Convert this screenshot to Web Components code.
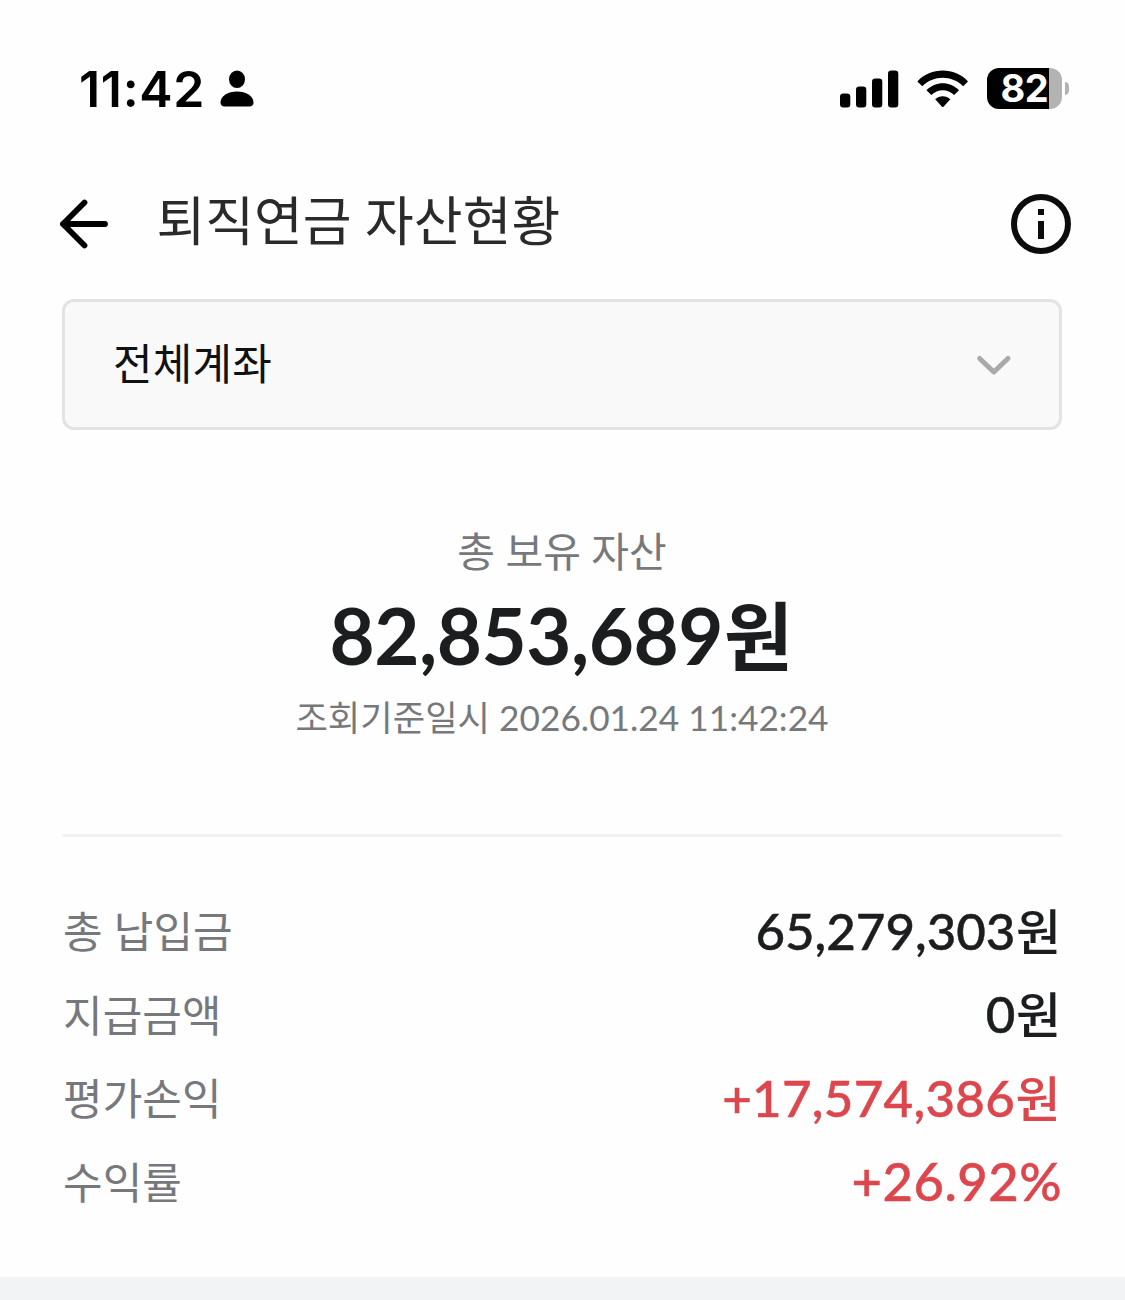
<!DOCTYPE html>
<html lang="ko">
<head>
    <meta charset="UTF-8">
    <meta name="viewport" content="width=device-width, initial-scale=1.0">
    <title>퇴직연금 자산현황</title>
    <style>
        body {
            margin: 0;
            background: #fefefe;
            color: #1c1d1f;
            font-family: Lato, "Noto Sans CJK KR", sans-serif;
        }
    </style>
</head>
<body>
    <pension-app>
        <status-bar slot="top" time="11:42" battery="82"></status-bar>
        <page-header slot="top">퇴직연금 자산현황</page-header>
        <account-select>전체계좌</account-select>
        <asset-summary>
            <span slot="label">총 보유 자산</span>
            <span slot="amount">82,853,689</span>
            <span slot="unit">원</span>
            <span slot="date">조회기준일시 2026.01.24 11:42:24</span>
        </asset-summary>
        <asset-list>
            <asset-row label="총 납입금" unit="원">65,279,303</asset-row>
            <asset-row label="지급금액" unit="원">0</asset-row>
            <asset-row label="평가손익" unit="원" class="profit">+17,574,386</asset-row>
            <asset-row label="수익률" class="profit rate">+26.92%</asset-row>
        </asset-list>
    </pension-app>

    <script>
        class PensionApp extends HTMLElement {
            constructor() {
                super();
                this.attachShadow({ mode: 'open' });
                this.shadowRoot.innerHTML = `
                    <style>
                        :host {
                            display: flex;
                            flex-direction: column;
                            height: 1300px;
                            overflow: hidden;
                        }
                        main {
                            padding: 29px 63px 0 62px;
                        }
                        footer {
                            flex: 1;
                            margin-top: 66px;
                            background: #f2f3f5;
                        }
                    </style>
                    <slot name="top"></slot>
                    <main><slot></slot></main>
                    <footer></footer>
                `;
            }
        }

        class StatusBar extends HTMLElement {
            constructor() {
                super();
                this.attachShadow({ mode: 'open' });
                this.shadowRoot.innerHTML = `
                    <style>
                        :host {
                            display: flex;
                            justify-content: space-between;
                            align-items: center;
                            height: 178px;
                            padding: 0 56px 1px 79px;
                            box-sizing: border-box;
                            color: #000;
                            font-family: Inter, "Liberation Sans", sans-serif;
                        }
                        .side {
                            display: flex;
                            align-items: center;
                        }
                        .time {
                            font-size: 50px;
                            line-height: 60px;
                            font-weight: 600;
                            letter-spacing: 0.7px;
                            margin-right: 15px;
                        }
                        svg {
                            display: block;
                        }
                        .signal {
                            margin-right: 18px;
                        }
                        .wifi {
                            margin-right: 18px;
                        }
                        .battery {
                            width: 75px;
                            height: 41px;
                            padding-left: 13.5px;
                            box-sizing: border-box;
                            border-radius: 12px;
                            background: linear-gradient(90deg, #000 62px, #b3b3b3 62px);
                            color: #fff;
                            font-size: 38px;
                            line-height: 41px;
                            font-weight: 700;
                            letter-spacing: -0.5px;
                        }
                        .cap {
                            width: 4px;
                            height: 13px;
                            margin-left: 3px;
                            border-radius: 0 6px 6px 0 / 0 7px 7px 0;
                            background: #b3b3b3;
                        }
                    </style>
                    <div class="side">
                        <span class="time">${this.getAttribute('time')}</span>
                        <svg width="34" height="37" viewBox="0 0 34 37">
                            <ellipse cx="17" cy="9.2" rx="8" ry="8.8"/>
                            <path d="M0.5 32.5C0.5 26 8 21.5 17 21.5S33.5 26 33.5 32.5C33.5 35.2 32 36.5 29 36.5H5C2 36.5 0.5 35.2 0.5 32.5Z"/>
                        </svg>
                    </div>
                    <div class="side">
                        <svg class="signal" width="59" height="38" viewBox="0 0 59 38">
                            <rect x="0" y="23.5" width="10.3" height="14" rx="3.3"/>
                            <rect x="16" y="16.5" width="10.3" height="21" rx="3.3"/>
                            <rect x="32" y="8.5" width="10.3" height="29" rx="3.3"/>
                            <rect x="48" y="0.5" width="10.3" height="37" rx="3.3"/>
                        </svg>
                        <svg class="wifi" width="52" height="38" viewBox="0 0 52 38">
                            <path d="M0.4 11.4C14 -3 37.5 -3 51 11.4L46.2 16.2C35 4.8 16.5 4.8 5.3 16.2Z"/>
                            <path d="M9.5 20.3C18.7 11 32.8 11 42 20.3L37.2 25C30.6 18.5 20.9 18.5 14.3 25Z"/>
                            <path d="M18.2 29.2C22.3 25.2 29.2 25.2 33.3 29.2L26.5 36.7Q25.75 37.5 25 36.7Z"/>
                        </svg>
                        <div class="battery">${this.getAttribute('battery')}</div>
                        <div class="cap"></div>
                    </div>
                `;
            }
        }

        class PageHeader extends HTMLElement {
            constructor() {
                super();
                this.attachShadow({ mode: 'open' });
                this.shadowRoot.innerHTML = `
                    <style>
                        :host {
                            display: flex;
                            align-items: center;
                            height: 92px;
                            padding: 0 54px 0 58px;
                            color: #2a2a2b;
                        }
                        svg {
                            display: block;
                        }
                        h1 {
                            flex: 1;
                            margin: 0 0 0 46.5px;
                            padding-bottom: 7px;
                            font-size: 53px;
                            line-height: 64px;
                            font-weight: 400;
                        }
                    </style>
                    <svg width="52" height="52" viewBox="0 0 52 52" fill="none" stroke="#000" stroke-width="5.8" stroke-linecap="round" stroke-linejoin="round">
                        <path d="M47 26H5M26.5 4.5L5 26L26.5 47.5"/>
                    </svg>
                    <h1><slot></slot></h1>
                    <svg width="60" height="60" viewBox="0 0 60 60">
                        <circle cx="30" cy="30" r="27" fill="none" stroke="#0c0c0c" stroke-width="6"/>
                        <path d="M27 15H33V21H27ZM27 27H33V45H27Z" fill="#0c0c0c"/>
                    </svg>
                `;
            }
        }

        class AccountSelect extends HTMLElement {
            constructor() {
                super();
                this.attachShadow({ mode: 'open' });
                this.shadowRoot.innerHTML = `
                    <style>
                        :host {
                            display: flex;
                            justify-content: space-between;
                            align-items: center;
                            height: 131px;
                            padding: 0 47px 0 48px;
                            box-sizing: border-box;
                            border: 3px solid #e3e3e3;
                            border-radius: 12px;
                            background: #f9f9f9;
                            color: #111;
                            font-size: 43px;
                            line-height: 51px;
                        }
                        span {
                            padding-bottom: 2px;
                            letter-spacing: 0.2px;
                        }
                        svg {
                            display: block;
                        }
                    </style>
                    <span><slot></slot></span>
                    <svg width="36" height="24" viewBox="0 0 36 24" fill="none" stroke="#a8a9ab" stroke-width="5" stroke-linecap="round" stroke-linejoin="round">
                        <path d="M3.7 5.5L17.8 19L32 5.5"/>
                    </svg>
                `;
            }
        }

        class AssetSummary extends HTMLElement {
            constructor() {
                super();
                this.attachShadow({ mode: 'open' });
                this.shadowRoot.innerHTML = `
                    <style>
                        :host {
                            display: flex;
                            flex-direction: column;
                            align-items: center;
                            padding: 97px 0 95px;
                            border-bottom: 3px solid #f2f2f3;
                            color: #77787b;
                        }
                        .label {
                            font-size: 41px;
                            line-height: 50px;
                        }
                        .amount {
                            margin: 11px 2px 14px 0;
                            color: #1c1d1f;
                            font-size: 78px;
                            line-height: 94px;
                            height: 94px;
                            font-weight: 700;
                            letter-spacing: -0.5px;
                        }
                        .unit {
                            font-size: 75px;
                            margin-left: 1px;
                        }
                        .date {
                            font-size: 35.25px;
                            line-height: 43px;
                        }
                    </style>
                    <div class="label"><slot name="label"></slot></div>
                    <div class="amount"><slot name="amount"></slot><span class="unit"><slot name="unit"></slot></span></div>
                    <div class="date"><slot name="date"></slot></div>
                `;
            }
        }

        class AssetList extends HTMLElement {
            constructor() {
                super();
                this.attachShadow({ mode: 'open' });
                this.shadowRoot.innerHTML = `
                    <style>
                        :host {
                            display: flex;
                            flex-direction: column;
                            gap: 22.5px;
                            padding-top: 62.5px;
                        }
                    </style>
                    <slot></slot>
                `;
            }
        }

        class AssetRow extends HTMLElement {
            constructor() {
                super();
                this.attachShadow({ mode: 'open' });
                this.shadowRoot.innerHTML = `
                    <style>
                        :host {
                            display: flex;
                            justify-content: space-between;
                            align-items: center;
                            height: 61px;
                        }
                        .label {
                            padding: 3px 0 0 1px;
                            color: #77787b;
                            font-size: 43px;
                            line-height: 51px;
                            letter-spacing: 0.1px;
                        }
                        .value {
                            font-size: 51px;
                            line-height: 61px;
                            height: 61px;
                            font-weight: 500;
                            -webkit-text-stroke: 0.5px currentColor;
                        }
                        .unit {
                            font-size: 49px;
                            margin: 0 1px 0 0.5px;
                            -webkit-text-stroke: 0;
                        }
                        :host(.profit) .value {
                            color: #dc464d;
                            letter-spacing: 0.3px;
                        }
                        :host(.rate) .value {
                            font-size: 52.5px;
                            letter-spacing: 0.5px;
                        }
                        :host(.rate) .unit {
                            margin: 0;
                        }
                    </style>
                    <span class="label">${this.getAttribute('label')}</span>
                    <span class="value"><slot></slot><span class="unit">${this.getAttribute('unit') || ''}</span></span>
                `;
            }
        }

        customElements.define('pension-app', PensionApp);
        customElements.define('status-bar', StatusBar);
        customElements.define('page-header', PageHeader);
        customElements.define('account-select', AccountSelect);
        customElements.define('asset-summary', AssetSummary);
        customElements.define('asset-list', AssetList);
        customElements.define('asset-row', AssetRow);
    </script>
</body>
</html>
